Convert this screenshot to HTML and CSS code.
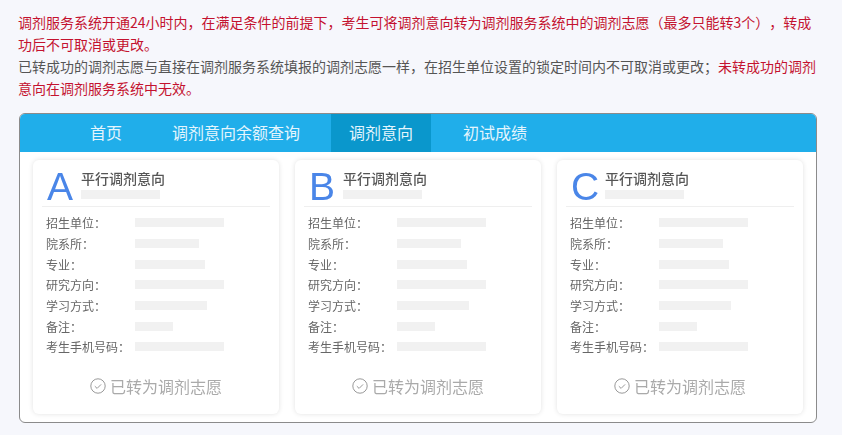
FILE: index.html
```html
<!DOCTYPE html>
<html lang="zh-CN">
<head>
<meta charset="utf-8">
<title>调剂意向</title>
<link rel="stylesheet" href="styles.css">
</head>
<body>
<div class="notice">
<p class="red">调剂服务系统开通24小时内，在满足条件的前提下，考生可将调剂意向转为调剂服务系统中的调剂志愿（最多只能转3个），转成功后不可取消或更改。</p>
<p>已转成功的调剂志愿与直接在调剂服务系统填报的调剂志愿一样，在招生单位设置的锁定时间内不可取消或更改；<span class="red">未转成功的调剂意向在调剂服务系统中无效。</span></p>
</div>
<div class="panel">
<nav class="tabs">
<a class="tab">首页</a>
<a class="tab">调剂意向余额查询</a>
<a class="tab active">调剂意向</a>
<a class="tab">初试成绩</a>
</nav>
<div class="cards">
<section class="card">
<header class="card-head"><span class="letter">A</span><div class="head-text"><div class="title">平行调剂意向</div><div class="bar w79 sub"></div></div></header>
<div class="rows">
<div class="row"><span class="label">招生单位：</span><span class="bar w89"></span></div>
<div class="row"><span class="label">院系所：</span><span class="bar w64"></span></div>
<div class="row"><span class="label">专业：</span><span class="bar w70"></span></div>
<div class="row"><span class="label">研究方向：</span><span class="bar w89"></span></div>
<div class="row"><span class="label">学习方式：</span><span class="bar w72"></span></div>
<div class="row"><span class="label">备注：</span><span class="bar w38"></span></div>
<div class="row"><span class="label">考生手机号码：</span><span class="bar w89"></span></div>
</div>
<div class="status"><svg class="check" viewBox="0 0 16 16" width="16" height="16"><circle cx="8" cy="8" r="7.2"/><path d="M4.8 8.2l2.3 2.2 4-4"/></svg><span>已转为调剂志愿</span></div>
</section>
<section class="card">
<header class="card-head"><span class="letter">B</span><div class="head-text"><div class="title">平行调剂意向</div><div class="bar w79 sub"></div></div></header>
<div class="rows">
<div class="row"><span class="label">招生单位：</span><span class="bar w89"></span></div>
<div class="row"><span class="label">院系所：</span><span class="bar w64"></span></div>
<div class="row"><span class="label">专业：</span><span class="bar w70"></span></div>
<div class="row"><span class="label">研究方向：</span><span class="bar w89"></span></div>
<div class="row"><span class="label">学习方式：</span><span class="bar w72"></span></div>
<div class="row"><span class="label">备注：</span><span class="bar w38"></span></div>
<div class="row"><span class="label">考生手机号码：</span><span class="bar w89"></span></div>
</div>
<div class="status"><svg class="check" viewBox="0 0 16 16" width="16" height="16"><circle cx="8" cy="8" r="7.2"/><path d="M4.8 8.2l2.3 2.2 4-4"/></svg><span>已转为调剂志愿</span></div>
</section>
<section class="card">
<header class="card-head"><span class="letter">C</span><div class="head-text"><div class="title">平行调剂意向</div><div class="bar w79 sub"></div></div></header>
<div class="rows">
<div class="row"><span class="label">招生单位：</span><span class="bar w89"></span></div>
<div class="row"><span class="label">院系所：</span><span class="bar w64"></span></div>
<div class="row"><span class="label">专业：</span><span class="bar w70"></span></div>
<div class="row"><span class="label">研究方向：</span><span class="bar w89"></span></div>
<div class="row"><span class="label">学习方式：</span><span class="bar w72"></span></div>
<div class="row"><span class="label">备注：</span><span class="bar w38"></span></div>
<div class="row"><span class="label">考生手机号码：</span><span class="bar w89"></span></div>
</div>
<div class="status"><svg class="check" viewBox="0 0 16 16" width="16" height="16"><circle cx="8" cy="8" r="7.2"/><path d="M4.8 8.2l2.3 2.2 4-4"/></svg><span>已转为调剂志愿</span></div>
</section>
</div>
</div>
</body>
</html>
```
FILE: styles.css
```css
* { box-sizing: border-box; }
html, body { height: 100%; }
body {
  margin: 0;
  overflow: hidden;
  background: #f6f7fc;
  color: #555;
  font-family: "Noto Sans CJK SC", "Liberation Sans", sans-serif;
  font-size: 14px;
  text-spacing-trim: space-all;
}
.notice { padding: 11px 20px 0 18px; line-height: 22px; }
.notice p { margin: 0; }
.red { color: #c4122f; }
.panel {
  margin: 14px 25px 0 19px;
  height: 310px;
  border: 1px solid #8b8b8b;
  border-radius: 6px;
  background: #fff;
  overflow: hidden;
}
.tabs {
  display: flex;
  gap: 14px;
  height: 39px;
  padding-left: 53px;
  background: #20aeea;
  margin: -1px -1px 0;
}
.tab {
  padding: 0 18px;
  color: #e4f5fd;
  font-size: 16px;
  line-height: 38px;
}
.tab.active { margin-left: -1px; background: #0a97cc; }
.cards {
  display: flex;
  gap: 16px;
  padding: 8px 13px 0;
}
.card {
  width: 246px;
  height: 254px;
  padding: 0 9px;
  border-radius: 6px;
  background: #fff;
  box-shadow: 0 0 5px rgba(0, 0, 0, .12);
  filter: blur(.35px);
}
.card-head {
  display: flex;
  height: 47px;
  padding-left: 5px;
  border-bottom: 1px solid #efefef;
}
.letter {
  width: 34px;
  color: #4a86e8;
  font-family: "Liberation Sans", sans-serif;
  font-size: 39px;
  line-height: 54px;
}
.head-text { padding-top: 8px; }
.title { color: #555; font-size: 14px; font-weight: 500; line-height: 20px; }
.bar { display: block; height: 9px; background: #f1f1f1; }
.sub { margin-top: 2px; }
.rows { padding: 5.4px 0 0 4px; }
.row {
  display: flex;
  align-items: center;
  height: 20.7px;
  color: #666;
  font-size: 12px;
}
.label { width: 89px; flex: none; }
.w38 { width: 38px; }
.w64 { width: 64px; }
.w70 { width: 70px; }
.w72 { width: 72px; }
.w79 { width: 79px; }
.w89 { width: 89px; }
.status {
  display: flex;
  align-items: center;
  justify-content: center;
  gap: 4px;
  margin-top: 17.2px;
  color: #aaa;
  font-size: 16px;
  line-height: 24px;
}
.check { fill: none; stroke: #999; stroke-width: 1; }
```
